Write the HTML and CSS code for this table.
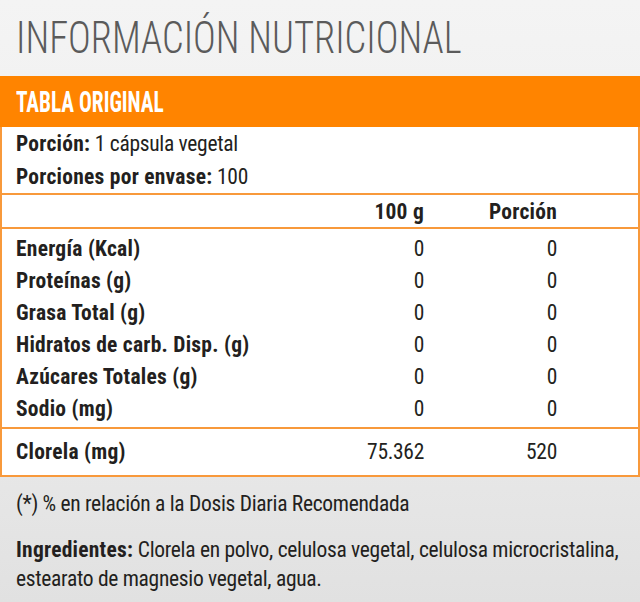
FILE: index.html
```html
<!DOCTYPE html>
<html lang="es">
<head>
<meta charset="utf-8">
<title>Información nutricional</title>
<link rel="stylesheet" href="styles.css">
</head>
<body>
<main class="page">
  <h1 class="title"><span class="squeeze">INFORMACIÓN NUTRICIONAL</span></h1>
  <section class="table">
    <div class="table-head"><span class="squeeze">TABLA ORIGINAL</span></div>
    <div class="serving">
      <p><b>Porción:</b> 1 cápsula vegetal</p>
      <p><b>Porciones por envase:</b> 100</p>
    </div>
    <div class="grid cols">
      <span></span><b class="num">100 g</b><b class="num">Porción</b>
    </div>
    <div class="grid rows">
      <b>Energía (Kcal)</b><span class="num">0</span><span class="num">0</span>
      <b>Proteínas (g)</b><span class="num">0</span><span class="num">0</span>
      <b>Grasa Total (g)</b><span class="num">0</span><span class="num">0</span>
      <b>Hidratos de carb. Disp. (g)</b><span class="num">0</span><span class="num">0</span>
      <b>Azúcares Totales (g)</b><span class="num">0</span><span class="num">0</span>
      <b>Sodio (mg)</b><span class="num">0</span><span class="num">0</span>
    </div>
    <div class="grid extra">
      <b>Clorela (mg)</b><span class="num">75.362</span><span class="num">520</span>
    </div>
  </section>
  <p class="note">(*) % en relación a la Dosis Diaria Recomendada</p>
  <p class="ingredients"><b>Ingredientes:</b> Clorela en polvo, celulosa vegetal, celulosa microcristalina, estearato de magnesio vegetal, agua.</p>
</main>
</body>
</html>
```
FILE: styles.css
```css
* { box-sizing: border-box; }
html, body { margin: 0; padding: 0; }
body {
  width: 640px;
  height: 602px;
  background: linear-gradient(#f4f4f4, #f1f1f1 20%, #e9e9e9 70%, #e1e1e1);
  font-family: "Roboto Condensed", "Roboto", sans-serif;
  color: #231f20;
  font-size: 21.5px;
  letter-spacing: -0.3px;
}
b { font-weight: bold; letter-spacing: 0.25px; }
.squeeze { display: inline-block; transform-origin: left center; white-space: nowrap; letter-spacing: 0; }
.page { padding-top: 14px; }
.title {
  margin: 0;
  padding-left: 16px;
  font-size: 44px;
  line-height: 48px;
  font-weight: 300;
  color: #5b5b5b;
  height: 62px;
}
.title .squeeze { transform: scaleX(0.875); }
.table {
  background: #fff;
  border: 2px solid #f8993b;
  border-top: 0;
}
.table-head {
  background: #ff8400;
  color: #fff;
  font-weight: bold;
  font-size: 30px;
  height: 51px;
  line-height: 51px;
  margin: 0 -2px;
  padding-left: 16px;
}
.table-head .squeeze { transform: scaleX(0.71); }
.serving { padding-left: 14px; border-bottom: 2px solid #f8993b; }
.serving p { margin: 0; line-height: 33px; }
.grid {
  display: grid;
  grid-template-columns: 1fr 120px 133px;
  padding: 0 81px 0 14px;
}
.num { text-align: right; }
.cols { height: 34px; align-items: center; border-bottom: 2px solid #f8993b; }
.rows { padding-top: 4px; padding-bottom: 2px; border-bottom: 2px solid #f8993b; }
.rows > * { line-height: 32px; }
.extra { line-height: 46px; }
.note { margin: 12px 0 0; padding-left: 16px; line-height: 29px; }
.ingredients { margin: 17px 0 0; padding: 0 0 0 16px; line-height: 29px; }
```
